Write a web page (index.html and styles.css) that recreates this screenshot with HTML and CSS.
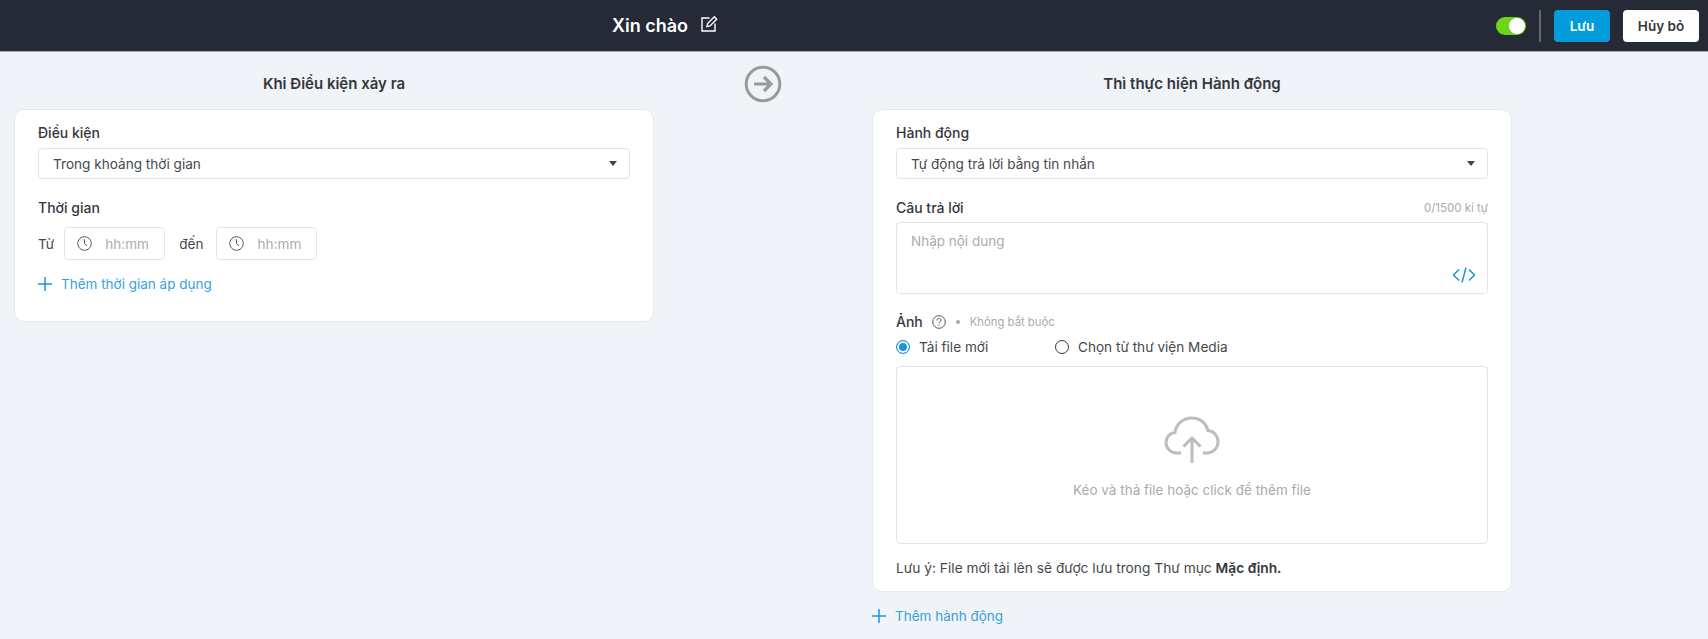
FILE: index.html
```html
<!DOCTYPE html>
<html lang="vi">
<head>
<meta charset="utf-8">
<title>Xin chào</title>
<link rel="stylesheet" href="styles.css">
</head>
<body>
<header class="topbar">
  <div class="title-wrap">
    <span class="title">Xin chào</span>
    <svg class="edit-icon" width="18" height="18" viewBox="0 0 18 18" fill="none" stroke="#fff" stroke-width="1.4"><path d="M9.5 3H2v13h13V8.5"/><path d="M7 11.5l.6-3L14.3 1.8l2.4 2.4L10 10.900z"/></svg>
  </div>
  <div class="actions">
    <span class="toggle"><span class="knob"></span></span>
    <span class="divider"></span>
    <button class="btn btn-primary">Lưu</button>
    <button class="btn btn-light">Hủy bỏ</button>
  </div>
</header>
<main class="content">
  <section class="column">
    <h2 class="col-title">Khi Điều kiện xảy ra</h2>
    <div class="card card-left">
      <div class="label">Điều kiện</div>
      <div class="select"><span>Trong khoảng thời gian</span><i class="caret"></i></div>
      <div class="label label-time">Thời gian</div>
      <div class="time-row">
        <span>Từ</span>
        <div class="time-input">
          <svg width="15" height="15" viewBox="0 0 15 15" fill="none" stroke="#55595f" stroke-width="1"><circle cx="7.500" cy="7.500" r="6.800"/><path d="M7.500 3.200v4.300l2.500 2.500"/></svg>
          <span class="placeholder">hh:mm</span>
        </div>
        <span class="to">đến</span>
        <div class="time-input">
          <svg width="15" height="15" viewBox="0 0 15 15" fill="none" stroke="#55595f" stroke-width="1"><circle cx="7.500" cy="7.500" r="6.800"/><path d="M7.500 3.200v4.300l2.500 2.500"/></svg>
          <span class="placeholder">hh:mm</span>
        </div>
      </div>
      <a class="add-link add-time">
        <svg width="14" height="14" viewBox="0 0 14 14" stroke="#1b95dc" stroke-width="1.500"><path d="M7 0v14M0 7h14"/></svg>
        <span>Thêm thời gian áp dụng</span>
      </a>
    </div>
  </section>
  <div class="arrow-col">
    <svg width="38" height="38" viewBox="0 0 38 38" fill="none" stroke="#9a9a9a"><circle cx="19" cy="19" r="16.800" stroke-width="3"/><path d="M10 19h17M20 12l7 7-7 7" stroke-width="3.200"/></svg>
  </div>
  <section class="column">
    <h2 class="col-title">Thì thực hiện Hành động</h2>
    <div class="card card-right">
      <div class="label">Hành động</div>
      <div class="select"><span>Tự động trả lời bằng tin nhắn</span><i class="caret"></i></div>
      <div class="label-row">
        <span class="label">Câu trả lời</span>
        <span class="counter">0/1500 kí tự</span>
      </div>
      <div class="textarea">
        <span class="placeholder">Nhập nội dung</span>
        <svg class="code-icon" width="24" height="16" viewBox="0 0 24 16" fill="none" stroke="#1b95dc" stroke-width="1.500"><path d="M7 2.500L1.500 8 7 13.500M17 2.500L22.500 8 17 13.500M14 .5L10 15.500"/></svg>
      </div>
      <div class="image-head">
        <span class="label">Ảnh</span>
        <svg width="14" height="14" viewBox="0 0 14 14" fill="none" stroke="#55595f"><circle cx="7" cy="7" r="6.300"/><path d="M5 5.500C5 4.200 6 3.500 7 3.500s2 .7 2 1.800C9 6.700 7 6.700 7 8.300"/><path d="M7 9.600v1.200"/></svg>
        <span class="dot"></span>
        <span class="optional">Không bắt buộc</span>
      </div>
      <div class="radios">
        <label class="radio radio-first"><i class="radio-mark checked"></i>Tải file mới</label>
        <label class="radio"><i class="radio-mark"></i>Chọn từ thư viện Media</label>
      </div>
      <div class="dropzone">
        <svg width="56" height="48" viewBox="0 0 56 48" fill="none" stroke="#bdbdbd" stroke-width="3"><path d="M17 37H13C6 37 2 32 2 26.500 2 21 6 17 11 16.500 12 8 19 2 28 2c8 0 14 5 16 12.500 6 .5 10 5.500 10 11.500 0 6-5 11-11 11h-4"/><path d="M28 47V22M19.500 30.500L28 22l8.500 8.500"/></svg>
        <span class="drop-text">Kéo và thả file hoặc click để thêm file</span>
      </div>
      <p class="note">Lưu ý: File mới tải lên sẽ được lưu trong Thư mục <b>Mặc định.</b></p>
    </div>
    <a class="add-link add-action">
      <svg width="14" height="14" viewBox="0 0 14 14" stroke="#1b95dc" stroke-width="1.500"><path d="M7 0v14M0 7h14"/></svg>
      <span>Thêm hành động</span>
    </a>
  </section>
</main>
</body>
</html>
```

FILE: styles.css
```css
* { box-sizing: border-box; }
html, body { margin: 0; height: 100%; }
body {
  background: #f0f3f7;
  font-family: Inter, "Noto Sans", sans-serif;
  font-size: 13.600px;
  color: #33373d;
  overflow: hidden;
}
.topbar {
  height: 52px;
  background: #252a36;
  border-bottom: 1px solid #a5a8ad;
  display: flex;
  align-items: center;
  padding: 0 9px 0 612px;
  justify-content: space-between;
}
.title-wrap { display: flex; align-items: center; gap: 12px; }
.title { color: #fff; font-size: 18px; font-weight: 600; line-height: 48px; }
.edit-icon { margin-top: -3px; }
.actions { display: flex; align-items: center; }
.toggle {
  width: 30px; height: 18px; border-radius: 9px; background: #6fd41c;
  display: block; position: relative; margin-right: 13px;
}
.knob {
  position: absolute; right: 1px; top: 1px; width: 16px; height: 16px;
  border-radius: 50%; background: #fff;
}
.divider { width: 2px; height: 32px; background: #626772; margin-right: 13px; }
.btn {
  height: 32px; border: 0; border-radius: 4px; font-family: inherit;
  font-size: 13.500px; font-weight: 600; padding: 0;
}
.btn-primary { width: 56px; background: #029cdd; color: #fff; margin-right: 13px; }
.btn-light { width: 76px; background: #fff; color: #33373d; }
.content {
  display: flex;
  align-items: flex-start;
  padding-left: 14px;
}
.column { width: 640px; }
.arrow-col {
  width: 218px;
  display: flex;
  justify-content: center;
  padding-top: 13px;
}
.col-title {
  margin: 0;
  height: 57px;
  font-size: 15px;
  font-weight: 600;
  line-height: 20px;
  padding-top: 22px;
  text-align: center;
  color: #33373d;
}
.card {
  background: #fff;
  border: 1px solid #e6e8ee;
  border-radius: 10px;
  padding: 13px 23px 0;
}
.card-left { height: 213px; }
.card-right { height: 483px; }
.label { font-size: 14px; font-weight: 500; line-height: 20px; color: #33373d; }
.select {
  height: 31px; margin-top: 5px;
  border: 1px solid #e3e5ec; border-radius: 4px;
  padding: 0 14px;
  display: flex; align-items: center; justify-content: space-between;
  color: #44484e;
}
.caret {
  width: 0; height: 0;
  border-left: 4.500px solid transparent; border-right: 4.500px solid transparent;
  border-top: 5px solid #444;
  margin-right: -2px;
}
.label-time { margin-top: 19px; }
.time-row { display: flex; align-items: center; margin-top: 9px; color: #44484e; }
.time-input {
  width: 101px; height: 33px; margin-left: 10px;
  border: 1px solid #e3e5ec; border-radius: 4px;
  display: flex; align-items: center; padding-left: 12px; gap: 13px;
}
.to { margin-left: 14px; }
.to + .time-input { margin-left: 13px; }
.placeholder { color: #a9abae; }
.add-link { display: flex; align-items: center; gap: 9px; color: #3a9fdc; line-height: 20px; font-size: 13.500px; }
.add-time { margin-top: 14px; }
.add-action { margin-top: 14px; }
.label-row { display: flex; justify-content: space-between; align-items: center; margin-top: 19px; }
.counter { font-size: 11.500px; color: #a9abae; }
.textarea {
  position: relative;
  height: 72px; margin-top: 4px;
  border: 1px solid #e3e5ec; border-radius: 4px;
  padding: 8px 14px;
  line-height: 20px;
  font-size: 13.500px;
}
.code-icon { position: absolute; right: 11px; bottom: 10px; }
.image-head { display: flex; align-items: center; margin-top: 18px; height: 20px; }
.image-head svg { margin-left: 9px; }
.dot { width: 4px; height: 4px; border-radius: 50%; background: #a9abae; margin: 0 10px; }
.optional { font-size: 11.300px; color: #a9abae; }
.radios { display: flex; height: 20px; margin-top: 5px; align-items: center; color: #44484e; }
.radio { display: flex; align-items: center; gap: 9px; }
.radio-first { width: 159px; }
.radio-mark {
  width: 14px; height: 14px; border-radius: 50%;
  border: 1.500px solid #33373d; background: #fff; display: block;
}
.radio-mark.checked { border-color: #1b95dc; background: #1b95dc; box-shadow: inset 0 0 0 2px #fff; }
.dropzone {
  height: 178px; margin-top: 9px;
  border: 1px solid #e3e5ec; border-radius: 4px;
  display: flex; flex-direction: column; align-items: center;
  padding-top: 49px;
}
.drop-text { color: #a9abae; margin-top: 16px; line-height: 20px; font-size: 13.500px; }
.note { margin: 14px 0 0; line-height: 20px; color: #44484e; font-size: 13.750px; }
.note b { font-weight: 600; color: #33373d; }
```
